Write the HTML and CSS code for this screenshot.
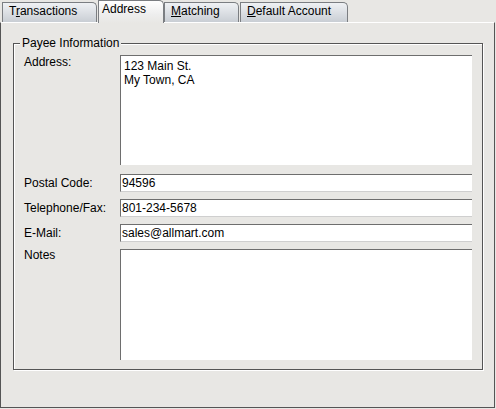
FILE: index.html
```html
<!DOCTYPE html>
<html>
<head>
<meta charset="utf-8">
<link rel="stylesheet" href="styles.css">
</head>
<body>
<div class="tabs">
  <div class="tab tab-trans">T<u>r</u>ansactions</div>
  <div class="tab tab-addr selected">Address</div>
  <div class="tab tab-match"><u>M</u>atching</div>
  <div class="tab tab-default"><u>D</u>efault Account</div>
</div>
<div class="panel">
  <div class="group">
    <span class="legend">Payee Information</span>
    <div class="form">
      <div class="label label-top">Address:</div>
      <textarea class="area area-address">123 Main St.
My Town, CA</textarea>
      <div class="label">Postal Code:</div>
      <input class="field" value="94596">
      <div class="label">Telephone/Fax:</div>
      <input class="field" value="801-234-5678">
      <div class="label">E-Mail:</div>
      <input class="field" value="sales@allmart.com">
      <div class="label label-top notes-row">Notes</div>
      <textarea class="area area-notes notes-row"></textarea>
    </div>
  </div>
</div>
</body>
</html>
```
FILE: styles.css
```css
* { box-sizing: border-box; }
html, body {
  margin: 0;
  padding: 0;
  background: #e8e7e4;
  font-family: "Liberation Sans", Arial, sans-serif;
  font-size: 12px;
  color: #000;
}
.tabs {
  display: flex;
  align-items: flex-end;
  height: 22px;
  padding-left: 2px;
}
.tab {
  height: 20px;
  margin-left: 1px;
  border: 1px solid #7b7e82;
  border-bottom: none;
  border-radius: 0 5px 0 0;
  background: linear-gradient(#eff1f4, #c9ced4);
  padding: 1px 0 0 6px;
  line-height: 14px;
  white-space: nowrap;
}
.tab u { text-underline-offset: 1px; }
.tab-trans { width: 95px; margin-left: 0; }
.tab-addr { width: 66px; }
.tab-match { width: 75px; margin-left: 0; }
.tab-default { width: 108px; margin-left: 1px; }
.tab.selected {
  height: 23px;
  margin-bottom: -1px;
  padding: 1px 0 0 3px;
  background: linear-gradient(#ffffff, #eeeeee 60%, #e8e7e4);
  position: relative;
  z-index: 1;
}
.panel {
  width: 495px;
  height: 386px;
  border-top: 1px solid #ffffff;
  border-left: 1px solid #555555;
  border-right: 1px solid #555555;
  border-bottom: 1px solid #555555;
  padding: 20px 0 0 12px;
}
.group {
  position: relative;
  width: 470px;
  height: 327px;
  border: 1px solid #555555;
  box-shadow: inset 1px 1px 0 #ffffff, 1px 1px 0 #ffffff;
  padding: 11px 10px 0 10px;
}
.legend {
  position: absolute;
  left: 6px;
  top: -8px;
  padding: 0 2px;
  line-height: 14px;
  background: #e8e7e4;
}
.form {
  display: grid;
  grid-template-columns: 96px 352px;
  grid-template-rows: 112px 18px 18px 18px 111px;
  row-gap: 7px;
}
.label {
  align-self: center;
  line-height: 14px;
  white-space: nowrap;
}
.label-top { align-self: start; }
.notes-row { margin-top: -1px; }
.field, .area {
  font-family: "Liberation Sans", Arial, sans-serif;
  font-size: 12px;
  color: #000;
  background: #ffffff;
  margin: 0;
  outline: none;
  border: none;
  border-top: 1px solid #6e6e6e;
  border-left: 1px solid #6e6e6e;
}
.field {
  width: 352px;
  height: 18px;
  padding: 0 0 0 1px;
  border-bottom: 1px solid #cfcfcf;
}
.area {
  width: 352px;
  resize: none;
  overflow: hidden;
  padding: 3px 0 0 3px;
  line-height: 14px;
  align-self: start;
}
.area-address { height: 110px; }
.area-notes { height: 111px; }
```
